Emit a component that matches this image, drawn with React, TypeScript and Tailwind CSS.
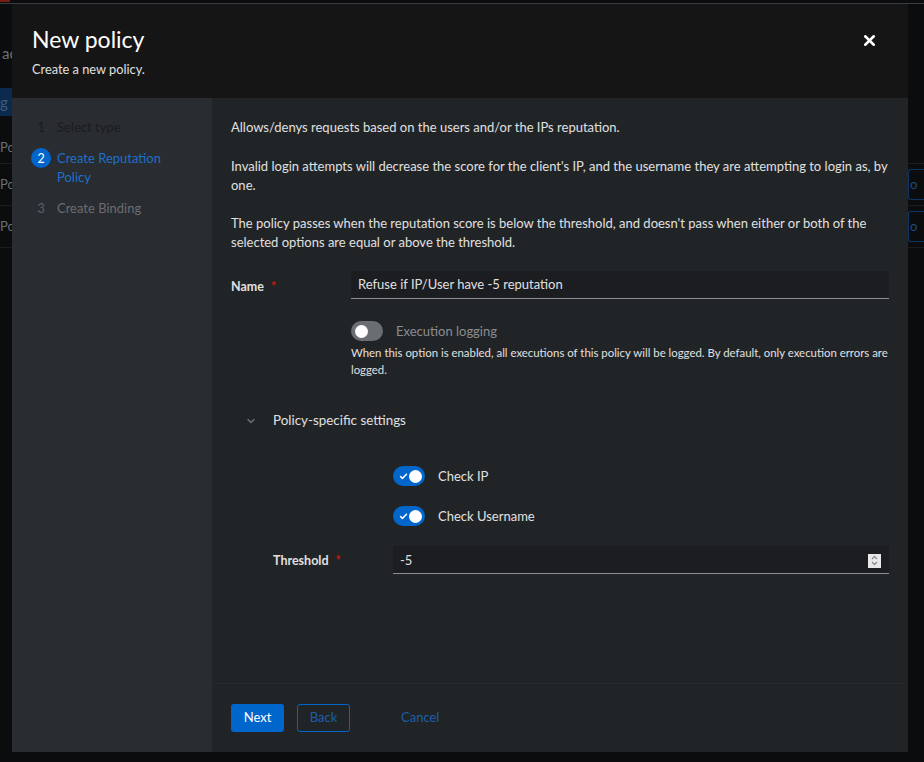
import { Check, ChevronDown, X } from 'lucide-react';

const font = { fontFamily: 'Lato, "Noto Sans", "Liberation Sans", sans-serif' };

type Step = { num: number; label: string; state: 'done' | 'current' | 'todo' };

const steps: Step[] = [
  { num: 1, label: 'Select type', state: 'done' },
  { num: 2, label: 'Create Reputation Policy', state: 'current' },
  { num: 3, label: 'Create Binding', state: 'todo' },
];

const Toggle = ({ on }: { on: boolean }) => (
  <span
    className={`relative flex h-[20px] w-[32px] shrink-0 items-center rounded-full ${
      on ? 'bg-[#0066cc]' : 'bg-[#6a6e73]'
    }`}
  >
    {on && <Check className="absolute left-[6px] text-white" size={9} strokeWidth={4} />}
    <span
      className={`absolute h-[13px] w-[13px] rounded-full bg-white ${
        on ? 'left-[16px]' : 'left-[4px]'
      }`}
    />
  </span>
);

const Backdrop = () => (
  <div className="flex h-full w-full flex-col overflow-hidden whitespace-nowrap text-[13px] text-[#5a5d61]">
    <div className="flex h-[3px]">
      <div className="h-[2px] w-[10px] bg-[#7a1a14]" />
    </div>
    <div className="h-[1px] bg-[#3a3c3f]" />
    <div className="h-[41px]" />
    <div className="flex h-[16px] items-center pl-[2px] text-[15px] text-[#6c6f73]">ac</div>
    <div className="h-[27px]" />
    <div className="flex h-[28px] w-[12px] items-center overflow-hidden bg-[#0b2a4d] text-[15px] text-[#3d5a7c]">
      <span className="w-[12px] overflow-hidden">g</span>
    </div>
    <div className="flex h-[48px] items-end justify-between border-b border-[#1a1c1e] pb-[6px]">
      <span className="text-[#6c6f73]">Po</span>
    </div>
    {[0, 1].map((i) => (
      <div key={i} className="flex h-[42px] items-center justify-between border-b border-[#1a1c1e]">
        <span className="text-[#6c6f73]">Po</span>
        <span className="flex h-[31px] w-[16px] items-center rounded-l-[3px] border-y border-l border-[#0e3461] pl-[1px] text-[#1c4a80]">
          o
        </span>
      </div>
    ))}
  </div>
);

export default function App() {
  return (
    <div className="relative h-[762px] w-[924px] overflow-hidden bg-[#0b0c0d]" style={font}>
      <Backdrop />

      {/* Modal */}
      <div className="absolute left-[12px] top-[4px] flex h-[748px] w-[896px] flex-col bg-[#212427]">
        <header className="flex h-[94px] shrink-0 justify-between bg-[#151515] pl-[20px] pr-[30px] pt-[21px]">
          <div>
            <h1 className="text-[23px] leading-[28px] text-white">New policy</h1>
            <p className="mt-[7px] text-[12.8px] text-[#e0e0e0]">Create a new policy.</p>
          </div>
          <button className="mt-[5px] h-[20px] text-white">
            <X size={17} strokeWidth={3.5} />
          </button>
        </header>

        <div className="flex min-h-0 flex-1">
          {/* Wizard nav */}
          <nav className="w-[200px] shrink-0 bg-[#292c30] pl-[19px] pt-[20px] text-[13px]">
            <ol className="flex flex-col gap-[12px]">
              {steps.map((s) => (
                <li key={s.num} className="flex items-start leading-[19px]">
                  {s.state === 'current' ? (
                    <span className="mr-[6px] mt-[-1px] flex h-[20px] w-[20px] shrink-0 items-center justify-center rounded-full bg-[#0066cc] text-[12.5px] text-white">
                      {s.num}
                    </span>
                  ) : (
                    <span
                      className={`mr-[6px] w-[20px] shrink-0 text-center text-[12.5px] ${
                        s.state === 'done' ? 'text-[#1a1c1f]' : 'text-[#5f6266]'
                      }`}
                    >
                      {s.num}
                    </span>
                  )}
                  <span
                    className={
                      s.state === 'current'
                        ? 'w-[125px] text-[#1e70c9]'
                        : s.state === 'done'
                          ? 'text-[#1a1c1f]'
                          : 'text-[#6a6d71]'
                    }
                  >
                    {s.label}
                  </span>
                </li>
              ))}
            </ol>
          </nav>

          {/* Main */}
          <main className="flex min-w-0 flex-1 flex-col">
            <div className="flex-1 pl-[19px] pr-[19px] pt-[20px] text-[13px] leading-[19px] text-[#e0e0e0]">
              <p className="mr-[-2px]">Allows/denys requests based on the users and/or the IPs reputation.</p>
              <p className="mr-[-2px] mt-[20px]">
                Invalid login attempts will decrease the score for the client's IP, and the username they
                are attempting to login as, by one.
              </p>
              <p className="mr-[-2px] mt-[19px]">
                The policy passes when the reputation score is below the threshold, and doesn't pass when
                either or both of the selected options are equal or above the threshold.
              </p>

              <div className="mt-[19px] flex items-center">
                <label className="w-[120px] shrink-0 pt-[3px] text-[12.5px] font-bold">
                  Name <span className="ml-[4px] text-[#c9190b]">*</span>
                </label>
                <div className="flex h-[28px] flex-1 items-center border-b border-[#8a8d90] bg-[#1b1d21] px-[7px] text-[13px]">
                  Refuse if IP/User have -5 reputation
                </div>
              </div>

              <div className="ml-[120px] mt-[22px]">
                <div className="flex items-center gap-[13px]">
                  <Toggle on={false} />
                  <span className="text-[#8a8d90]">Execution logging</span>
                </div>
                <p className="mt-[3px] text-[11.4px] leading-[17px]">
                  When this option is enabled, all executions of this policy will be logged. By default, only
                  execution errors are logged.
                </p>
              </div>

              <div className="mt-[33px] flex items-center pl-[14px]">
                <ChevronDown className="text-[#6a6e73]" size={12} strokeWidth={3} />
                <span className="ml-[16px] text-[13.4px]">Policy-specific settings</span>
              </div>

              <div className="ml-[42px] mt-[36px]">
                <div className="ml-[120px] flex flex-col gap-[20px]">
                  <div className="flex items-center gap-[13px]">
                    <Toggle on />
                    <span>Check IP</span>
                  </div>
                  <div className="flex items-center gap-[13px]">
                    <Toggle on />
                    <span>Check Username</span>
                  </div>
                </div>
                <div className="mt-[20px] flex items-center">
                  <label className="w-[120px] shrink-0 text-[12.5px] font-bold">
                    Threshold <span className="ml-[4px] text-[#c9190b]">*</span>
                  </label>
                  <div className="flex h-[28px] flex-1 items-center justify-between border-b border-[#8a8d90] bg-[#1b1d21] pl-[7px] pr-[8px] pt-[2px] text-[13px]">
                    <span>-5</span>
                    <span className="flex h-[14px] w-[13px] flex-col items-center justify-center bg-[#e8e8ea] text-[#8a8d90]">
                      <svg width="7" height="11" viewBox="0 0 7 11" fill="none" stroke="currentColor" strokeWidth="1.3">
                        <path d="M1 4 L3.5 1.5 L6 4" />
                        <path d="M1 7 L3.5 9.5 L6 7" />
                      </svg>
                    </span>
                  </div>
                </div>
              </div>
            </div>

            <footer className="flex h-[69px] shrink-0 items-start gap-[13px] border-t border-[#26292d] pl-[19px] pt-[20px] text-[13px]">
              <button className="h-[28px] w-[53px] rounded-[3px] bg-[#0066cc] text-white">Next</button>
              <button className="h-[28px] w-[53px] rounded-[3px] border border-[#0066cc] text-[#1a5fa8]">
                Back
              </button>
              <button className="ml-[38px] h-[28px] text-[#1a5fa8]">Cancel</button>
            </footer>
          </main>
        </div>
      </div>
    </div>
  );
}
